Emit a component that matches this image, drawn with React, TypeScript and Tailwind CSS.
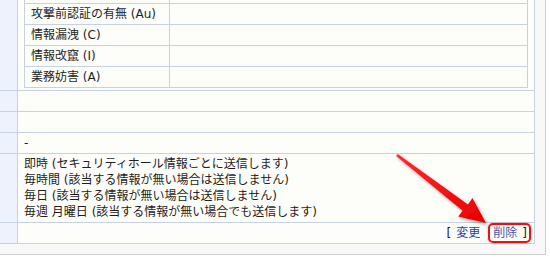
import React from 'react'

const FONT = { fontFamily: '"DejaVu Sans", "Noto Sans CJK JP", sans-serif' }

const innerRows = ['攻撃前認証の有無 (Au)', '情報漏洩 (C)', '情報改竄 (I)', '業務妨害 (A)']

const schedule = [
  '即時 (セキュリティホール情報ごとに送信します)',
  '毎時間 (該当する情報が無い場合は送信しません)',
  '毎日 (該当する情報が無い場合は送信しません)',
  '毎週 月曜日 (該当する情報が無い場合でも送信します)',
]

function Row({ children, h = 'h-[21px]' }: { children?: React.ReactNode; h?: string }) {
  return (
    <div className={`flex border-b border-[#c6d1e1] ${h}`}>
      <div className="w-[18px] shrink-0 border-r border-[#c6d1e1] bg-[#edf2fc]" />
      <div className="relative flex-1 bg-[#fdfdf9] pl-[6px] pr-[7px]">{children}</div>
    </div>
  )
}

function Arrow() {
  // tail (397,155) -> tip (486,223)
  return (
    <svg className="pointer-events-none absolute left-0 top-0" width="550" height="260" viewBox="0 0 550 260">
      <defs>
        <filter id="sh" x="-20%" y="-20%" width="140%" height="140%">
          <feDropShadow dx="1.5" dy="2" stdDeviation="1.5" floodColor="#000" floodOpacity="0.35" />
        </filter>
        <linearGradient id="rg" x1="0" y1="0" x2="1" y2="1">
          <stop offset="0" stopColor="#ff2a2a" />
          <stop offset="1" stopColor="#e60000" />
        </linearGradient>
      </defs>
      <polygon
        filter="url(#sh)"
        fill="url(#rg)"
        points="396.2,155.9 462.6,210.8 458.2,216.4 486,223 472.4,198 468,204.4 397.8,154.1"
      />
    </svg>
  )
}

export default function App() {
  return (
    <div className="relative h-[260px] w-[550px] overflow-hidden bg-white text-[12px] leading-[16px] text-[#1e1e1e]" style={FONT}>
      <div className="h-[255px] w-[546px] border-b border-r border-[#cdcdcd] bg-[#f8f8f8] pb-[10px] pr-[10px]">
        <div className="w-[535px] border-r border-[#c6d1e1]">
          {/* row holding the nested table */}
          <div className="flex border-b border-[#c6d1e1]">
            <div className="w-[18px] shrink-0 border-r border-[#c6d1e1] bg-[#edf2fc]" />
            <div className="flex-1 bg-[#fdfdf9] px-[6px] pb-[2px]">
              <div className="border-l border-r border-[#c6d1e1]">
                <div className="flex h-[4px] border-b border-[#c6d1e1]">
                  <div className="w-[145px] border-r border-[#c6d1e1]" />
                </div>
                {innerRows.map(r => (
                  <div key={r} className="flex h-[21px] border-b border-[#c6d1e1]">
                    <div className="w-[145px] border-r border-[#c6d1e1] py-[2px] pl-[6px]">{r}</div>
                    <div className="flex-1" />
                  </div>
                ))}
              </div>
            </div>
          </div>

          <Row />
          <Row />
          <Row>
            <div className="py-[2px]">-</div>
          </Row>
          <Row h="h-[69px]">
            <div className="py-[2px]">
              {schedule.map(s => (
                <div key={s}>{s}</div>
              ))}
            </div>
          </Row>
          <Row>
            <div className="flex justify-end py-[2px]">
              <span>[</span>
              <a className="ml-[5px] text-[#1d3fae]">変更</a>
              <a className="ml-[13px] text-[#4257a6]">削除</a>
              <span className="ml-[5px]">]</span>
            </div>
            <div className="absolute right-[3px] top-0 h-[20px] w-[43px] rounded-[5px] border-2 border-[#ec0f16] shadow-[0_0_2px_rgba(255,0,0,0.45)]" />
          </Row>
        </div>
      </div>
      <Arrow />
    </div>
  )
}
